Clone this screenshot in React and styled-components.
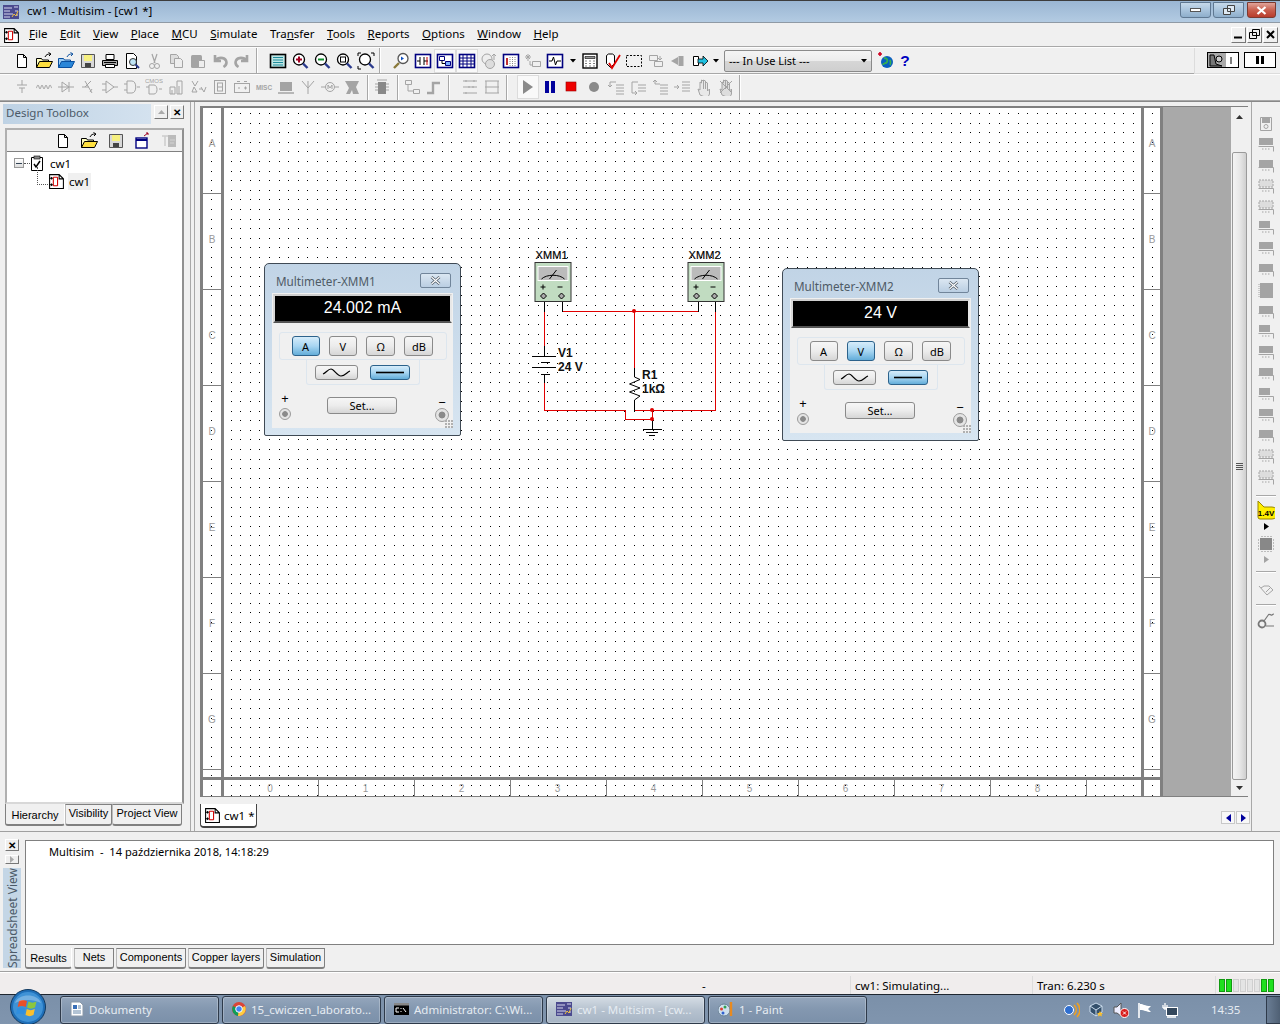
import React from 'react'
import styled, { createGlobalStyle } from 'styled-components'

const font = `"Noto Sans", "Liberation Sans", Arial, sans-serif`

const GlobalStyle = createGlobalStyle`
  html, body { margin: 0; padding: 0; background: #f0f0f0; }
  body { font-family: ${font}; font-size: 11.5px; color: #000; }
  * { box-sizing: border-box; }
`

/* ---------- small icon helpers ---------- */

const Svg = ({ w = 18, h = 18, vb, children }) => (
  <svg width={w} height={h} viewBox={vb || `0 0 ${w} ${h}`} fill="none" shapeRendering="geometricPrecision">
    {children}
  </svg>
)

const G = '#a4a4a4'
const K = '#000'

const Doc = () => <path d="M4.5 2.5h6l3 3v10h-9z M10.5 2.5v3h3" fill="#fff" stroke={K} />
const Mag = ({ fill = '#fff', children }) => (
  <>
    <circle cx="8" cy="7.5" r="5.5" fill={fill} stroke={K} strokeWidth="1.3" />
    {children}
    <path d="M12 11.5l4.5 4.5" stroke="#2a3a8c" strokeWidth="2.4" />
  </>
)
const BlueFrame = ({ children }) => (
  <>
    <rect x="1.5" y="2.5" width="15" height="13" fill="#fff" stroke="#00007f" strokeWidth="1.6" />
    {children}
  </>
)

const icons = {
  new: <Doc />,
  open: (
    <>
      <path d="M1.5 15.5v-9h5l1 1.5h6v2" fill="#ffffc0" stroke={K} />
      <path d="M1.5 15.5l3-6h13l-3 6z" fill="#ffe040" stroke={K} />
      <path d="M10 5c1-2.5 3-3 5-3M13.5.5l2.5 1.5-2 2" stroke={K} />
    </>
  ),
  openBlue: (
    <>
      <path d="M1.5 15.5v-9h5l1 1.5h6v2" fill="#9ccdf5" stroke="#0a4f9e" />
      <path d="M1.5 15.5l3-6h13l-3 6z" fill="#2a86d8" stroke="#0a4f9e" />
      <path d="M10 5c1-2.5 3-3 5-3M13.5.5l2.5 1.5-2 2" stroke="#0a4f9e" />
    </>
  ),
  save: (
    <>
      <path d="M2.5 2.5h13v13h-13z" fill="#d8d8d8" stroke="#555" />
      <rect x="5" y="3" width="8" height="6" fill="#f6f080" />
      <rect x="6" y="11" width="6" height="4" fill="#444" />
    </>
  ),
  print: (
    <>
      <path d="M5 2.5h8v5H5z" fill="#fff" stroke={K} />
      <path d="M1.5 8.5h15v5h-15z" fill="#aaa" stroke={K} />
      <path d="M4.5 12.5h9v3h-9z" fill="#fff" stroke={K} />
      <path d="M3 10.5h12" stroke={K} />
    </>
  ),
  preview: (
    <>
      <path d="M3.5 1.5h7l3 3v12h-10z" fill="#fff" stroke={K} />
      <circle cx="10" cy="10" r="3.5" fill="#bfe4f5" stroke="#333" />
      <path d="M12.5 12.5l3.5 3.5" stroke="#2a3a8c" strokeWidth="2" />
    </>
  ),
  cut: (
    <>
      <path d="M7 2l3 9M12 2L9 11" stroke={G} strokeWidth="1.2" />
      <circle cx="7" cy="14" r="2.5" stroke={G} />
      <circle cx="12" cy="14" r="2.5" stroke={G} />
    </>
  ),
  copy: (
    <>
      <path d="M3.5 2.5h6l2 2v7h-8z" fill="#ddd" stroke={G} />
      <path d="M7.5 6.5h6l2 2v7h-8z" fill="#eee" stroke={G} />
    </>
  ),
  paste: (
    <>
      <rect x="2" y="3" width="11" height="13" rx="1.5" fill={G} />
      <path d="M9.5 8.5h6v7h-6z" fill="#eee" stroke={G} />
    </>
  ),
  undo: <path d="M4 3v6h6M4.5 8.5C7 5 13 5 15 8.5c1 2.5 0 5-2.5 6.5" stroke={G} strokeWidth="2.6" />,
  redo: <path d="M14 3v6H8M13.5 8.5C11 5 5 5 3 8.5c-1 2.5 0 5 2.5 6.5" stroke={G} strokeWidth="2.6" />,
  full: (
    <>
      <rect x="1.5" y="2.5" width="15" height="13" fill="#bfe6e4" stroke={K} strokeWidth="1.6" />
      <path d="M4 5.5h10M4 8h10M4 10.5h10M4 13h10" stroke="#1f8c9c" />
    </>
  ),
  zoomIn: <Mag><path d="M5 7.5h6M8 4.5v6" stroke="#a00020" strokeWidth="2" /></Mag>,
  zoomOut: <Mag><path d="M5 7.5h6" stroke="#109030" strokeWidth="2" /></Mag>,
  zoomArea: <Mag><rect x="5.5" y="5" width="5" height="5" stroke={K} /></Mag>,
  zoomFit: (
    <>
      <Mag />
      <path d="M1 4V1h3M14 1h3v3M1 14v3h3" stroke={K} />
    </>
  ),
  find: (
    <>
      <circle cx="11" cy="6.5" r="5" fill="#fff" stroke="#555" strokeWidth="1.3" />
      <path d="M7 11l-5 5" stroke="#8a7a3a" strokeWidth="2.4" />
      <path d="M9 4.5l3 2-3 2z" fill="#1050c0" />
    </>
  ),
  grapher: <BlueFrame><path d="M6 5v8M10 5v8M3 9h3M10 9h4" stroke={K} /><path d="M13 5v8" stroke="#c00" /></BlueFrame>,
  blocks: <BlueFrame><path d="M3.5 4.5h5v4h-5z" stroke="#00007f" /><path d="M9.5 9.5h5v4h-5z" fill="#7fb0ff" stroke="#00007f" /><path d="M6 8.5v3h3" stroke={K} /></BlueFrame>,
  table: <BlueFrame><path d="M1.5 6h15M1.5 9h15M1.5 12h15M5 3v12M9 3v12M13 3v12" stroke="#00007f" /></BlueFrame>,
  globes: (
    <>
      <circle cx="7" cy="7" r="5" stroke={G} fill="#eee" />
      <circle cx="10" cy="12" r="4.5" stroke={G} fill="#ddd" />
      <path d="M14 2v6M12 4l2-2 2 2" stroke={G} />
    </>
  ),
  rows: <BlueFrame><path d="M4 6h2v7H4z" fill="#c03030" /><path d="M8 5v9M10.5 5v9M13 5v9" stroke="#888" strokeDasharray="1 1" /></BlueFrame>,
  star: <><path d="M4 2v7M1 5h6M2 3l4 4M6 3L2 7" stroke={G} /><path d="M8.5 9.5h8v5h-8zM6 9v4h2" stroke={G} /></>,
  wave: <BlueFrame><path d="M3 9h3l1.5-4 2 8 1.5-4h4" stroke={K} /></BlueFrame>,
  calc: (
    <>
      <rect x="2" y="2" width="14" height="14" fill="#fff" stroke={K} strokeWidth="1.4" />
      <path d="M4 4.5h10v2H4z" fill="#999" stroke={K} strokeWidth=".6" />
      <path d="M4.5 9h1M8.5 9h1M12.5 9h1M4.5 11.5h1M8.5 11.5h1M12.5 11.5h1M4.5 14h1M8.5 14h1M12.5 14h1" stroke={K} />
    </>
  ),
  check: (
    <>
      <path d="M3.5 3.5l2-1.5h4l2 1.5v8l-4 4-4-4z" fill="#fff" stroke={K} />
      <path d="M6 11l3 5 8-13" stroke="#e00000" strokeWidth="1.8" />
    </>
  ),
  dashed: <rect x="1.5" y="3.5" width="15" height="11" stroke={K} strokeDasharray="2 1.5" />,
  swap: <><path d="M2.5 3.5h8v5h-8zM7.5 9.5h8v5h-8z" stroke={G} /><path d="M13 4v4M11 6l2 2 2-2" stroke={G} /></>,
  back: <><path d="M9.5 4v10h5V4z" fill={G} /><path d="M9 5v8L2 9z" fill={G} /></>,
  forward: (
    <>
      <path d="M2.5 4.5h5v9h-5z" fill="#fff" stroke={K} />
      <path d="M7 7h5V4l5 5-5 5v-3H7z" fill="#20c0e0" stroke={K} strokeWidth=".8" />
    </>
  ),
  globe: (
    <>
      <circle cx="11" cy="10" r="6" fill="#0a5fc0" />
      <path d="M8 6c3 0 4 2 3 4s-4 1-4 3M14 8c1 2 1 3 0 5" stroke="#36b050" strokeWidth="1.8" />
      <path d="M2 2h4M4 0v4" stroke="#d00020" strokeWidth="1.6" />
    </>
  ),
  help: <text x="9" y="16" textAnchor="middle" fontFamily="Liberation Sans" fontWeight="700" fontSize="20" fill="#0000c0">?</text>,

  /* greyed component bar */
  gSource: <path d="M9 2v5M4 7h10M6 10h6M9 10v5" stroke={G} />,
  gBasic: <path d="M1 10c1 0 1-3 2-3s1 4 2 4 1-4 2-4 1 4 2 4 1-4 2-4 1 4 2 4 1-4 2-4 1 3 2 3" stroke={G} />,
  gDiode: <path d="M1 9h16M5 4v10l7-5zM12 4v10" stroke={G} />,
  gTrans: <path d="M6 3l7 12M3 9h7M12 3L6 9M13 11l-2 3" stroke={G} />,
  gAnalog: <path d="M1 6h4M1 12h4M13 9h4M5 3v12l8-6z" stroke={G} />,
  gTtl: <path d="M1 6h3M1 12h3M14 9h3M4 3h5c5 0 5 12 0 12H4z" stroke={G} />,
  gCmos: (
    <>
      <path d="M1 9h3M4 7h5c4 0 4 9 0 9H4zM14 11h3" stroke={G} />
      <text x="9" y="5" textAnchor="middle" fontFamily="Liberation Sans" fontSize="6" fill={G}>CMOS</text>
    </>
  ),
  gMcu: <path d="M3 9h5v7H3zM10 3h5v13h-5zM5 12v4M12 8v8" stroke={G} />,
  gMixed: <path d="M3 3l3 5 3-5M5 9l-2 5h5zM12 9l3 5 2-5M10 11h3" stroke={G} />,
  gSeg: <><rect x="3.5" y="2.5" width="11" height="13" stroke={G} /><rect x="6.5" y="5" width="5" height="8" stroke={G} /><path d="M6.5 9h5" stroke={G} /></>,
  gPower: <><rect x="1.5" y="5.5" width="15" height="9" stroke={G} /><path d="M4 3.5h3M11 3.5h3M5 10h2M11 10h3M12.5 8.5v3" stroke={G} /></>,
  gMisc: <text x="9" y="12" textAnchor="middle" fontFamily="Liberation Sans" fontSize="6.5" fontWeight="700" fill={G}>MISC</text>,
  gBlock: <><rect x="3" y="4" width="12" height="9" fill={G} /><path d="M1 15h16" stroke={G} strokeWidth="1.5" /></>,
  gAntenna: <path d="M3 3l6 7 6-7M9 3v13" stroke={G} />,
  gMotor: <><circle cx="9" cy="9" r="4.5" stroke={G} /><path d="M0 9h4M14 9h4M7 11V7l2 3 2-3v4" stroke={G} /></>,
  gBus: <path d="M2 3h14l-3 6 3 7H10l-1-4-2 4H3l3-6z" fill={G} />,
  gChip: <><rect x="5" y="4" width="8" height="12" fill="#888" /><path d="M2 6h3M2 9h3M2 12h3M13 6h3M13 9h3M13 12h3M4 2h10" stroke={G} /></>,
  gHier: <path d="M2.5 2.5h6v4h-6zM10.5 11.5h6v4h-6zM5 7v6h5" stroke={G} />,
  gStep: <path d="M2 15h6V5h7" stroke={G} strokeWidth="2.4" />,
  gBusA: <path d="M2 3h14M2 9h14M2 15h14M5 2v2M8 8v2M13 2v2M5 14v2M12 8v2" stroke={G} />,
  gBusB: <path d="M2 3h14M2 9h14M2 15h14M3 3v12M15 3v12" stroke={G} />,
  play: <path d="M4 2v14l10-7z" fill="#8a8a8a" />,
  pause: <path d="M4 3h4v12H4zM10 3h4v12h-4z" fill="#00009c" />,
  stop: <rect x="3" y="4" width="10" height="9" fill="#ee0000" stroke="#900" strokeWidth=".6" />,
  record: <circle cx="9" cy="9" r="5" fill="#8a8a8a" />,
  stepIn: <path d="M9 7h8M9 10h8M9 13h8M9 16h8M9 4H3v5M1 7l2 2 2-2" stroke={G} />,
  stepOver: <path d="M9 7h8M9 10h8M9 13h8M9 4H3v11h5M6 13l2 2-2 2" stroke={G} />,
  stepOut: <path d="M9 7h8M9 10h8M9 13h8M9 16h8M9 6H4V2M2 4l2-2 2 2" stroke={G} />,
  toCursor: <path d="M9 4h8M9 7h8M9 10h8M9 13h8M1 9h5M4 7l2 2-2 2" stroke={G} />,
  hand: <path d="M5 17l-2-6 2 1V4l1.5 1V2l2 1v8-9l2 1v8-7l2 1v8l2-2v5l-2 4z" fill="#e8e8e8" stroke={G} />,
  handX: <><path d="M5 17l-2-6 2 1V4l1.5 1V2l2 1v8-9l2 1v8-7l2 1v8l2-2v5l-2 4z" fill="#ddd" stroke={G} /><path d="M3 3l12 12M15 3L3 15" stroke={G} /></>,
}

const Ico = ({ n }) => <Svg>{icons[n]}</Svg>

const DropArrow = () => (
  <Svg w={6} h={4}>
    <path d="M0 0h6L3 3.5z" fill="#000" />
  </Svg>
)

const SchematicGlyph = ({ size = 16 }) => (
  <Svg w={size} h={size} vb="0 0 16 16">
    <path d="M1.5 1.5h9l4 4v9h-13z M10.5 1.5v4h4" fill="#fff" stroke="#000" />
    <path d="M5 4v8M5 4h4M5 12h4M9 4v8" stroke="#d00000" />
    <path d="M1 5h3M3 4l1 1-1 1M1 11h3M3 10l1 1-1 1" stroke="#000" />
  </Svg>
)

/* ---------- window chrome ---------- */

const Page = styled.div`
  width: 1280px;
  height: 1024px;
  display: flex;
  flex-direction: column;
  overflow: hidden;
  background: #f0f0f0;
`

const TitleBar = styled.div`
  height: 23px;
  flex: none;
  display: flex;
  align-items: center;
  padding: 0 4px 0 3px;
  border-top: 1px solid #3c3c3c;
  border-bottom: 1px solid #8f9aa5;
  background: linear-gradient(180deg, #9ab6d3 0%, #b3cbe2 100%);
`

const TitleText = styled.span`
  flex: 1;
  margin: 0 0 2px 8px;
`

const CaptionButton = styled.div`
  width: ${p => p.$w}px;
  height: 16px;
  margin-left: ${p => p.$gap}px;
  margin-top: -3px;
  display: flex;
  align-items: center;
  justify-content: center;
  border: 1px solid ${p => (p.$close ? '#7c3a30' : '#5f7892')};
  border-radius: 0 0 3px 3px;
  background: ${p =>
    p.$close
      ? 'linear-gradient(180deg, #e0a49a 0%, #c9604f 50%, #b83c2c 100%)'
      : 'linear-gradient(180deg, #c6d9ea 0%, #a9c4dd 50%, #8eaecb 100%)'};
`

const MenuBar = styled.div`
  height: 24px;
  flex: none;
  display: flex;
  align-items: center;
  padding-left: 3px;
  border-bottom: 1px solid #a8a8a8;
`

const MenuItem = styled.span`
  margin: 0 12.5px 2px 0;
  white-space: nowrap;
`

const MenuIcon = styled.span`
  display: flex;
  width: 26px;
  padding-top: 1px;
`

const MdiButtons = styled.div`
  margin-left: auto;
  margin-right: 2px;
  display: flex;
  gap: 1px;
`

const MdiButton = styled.div`
  width: 15px;
  height: 16px;
  display: flex;
  align-items: center;
  justify-content: center;
  border-right: 1px solid #777;
  border-bottom: 1px solid #777;
  border-top: 1px solid #fff;
  border-left: 1px solid #fff;
`

const ToolRow = styled.div`
  height: ${p => p.$h}px;
  flex: none;
  display: flex;
  align-items: center;
  padding: 0 0 ${p => p.$pb || 0}px 11px;
  border-bottom: 1px solid #a8a8a8;
  border-top: 1px solid #fdfdfd;
`

const Tool = styled.div`
  width: ${p => p.$w || 22}px;
  height: 24px;
  flex: none;
  display: flex;
  align-items: center;
  justify-content: center;
  ${p => p.$sel && `background: #f9f9f9; outline: 1px solid #dcdcdc; outline-offset: -1px;`}
`

const ToolSep = styled.div`
  width: 1px;
  height: 25px;
  flex: none;
  background: #a8a8a8;
  box-shadow: 1px 0 0 #fff;
  margin: 0 ${p => p.$r}px 0 ${p => p.$l}px;
`

const Combo = styled.div`
  width: 148px;
  height: 22px;
  margin-left: 3px;
  display: flex;
  align-items: center;
  justify-content: space-between;
  padding: 0 4px 0 4px;
  border: 1px solid #8a8a8a;
  border-radius: 2px;
  background: linear-gradient(180deg, #f4f4f4 0%, #ececec 50%, #d6d6d6 51%, #cfcfcf 100%);
  font-size: 11px;
`

const SwitchArea = styled.div`
  margin-left: auto;
  width: 86px;
  height: 26px;
  display: flex;
  align-items: center;
  gap: 5px;
  padding-left: 12px;
  border-left: 1px solid #dcdcdc;
  border-bottom: 1px solid #dcdcdc;
`

const SimSwitch = styled.div`
  width: 32px;
  height: 16px;
  display: flex;
  align-items: center;
  justify-content: center;
  border: 1px solid #000;
  background: ${p => p.$bg};
`

/* ---------- main area ---------- */

const Main = styled.div`
  flex: 1;
  display: flex;
  min-height: 0;
  border-bottom: 1px solid #a0a0a0;
  border-top: 1px solid #888;
`

const LeftPanel = styled.div`
  width: 191px;
  flex: none;
  display: flex;
  flex-direction: column;
  padding: 2px 6px 5px 3px;
  border-right: 1px solid #a8a8a8;
`

const PanelHead = styled.div`
  height: 20px;
  flex: none;
  display: flex;
  gap: 2px;
`

const PanelTitle = styled.div`
  flex: 1;
  display: flex;
  align-items: center;
  padding: 0 0 3px 3px;
  background: linear-gradient(90deg, #bed2e4, #d4e2ef);
  color: #4c5a68;
  margin-right: 1px;
`

const SmallBtn = styled.div`
  width: 14px;
  height: 14px;
  margin-top: 1px;
  display: flex;
  align-items: center;
  justify-content: center;
  background: #efefef;
  border: 1px solid #fff;
  border-right-color: #777;
  border-bottom-color: #777;
  font-size: 10px;
  font-weight: 700;
  line-height: 1;
`

const PanelBox = styled.div`
  flex: 1;
  margin: 4px 0 0 2px;
  display: flex;
  flex-direction: column;
  border: 2px solid #b0b0b0;
  border-bottom-color: #d8d8d8;
  border-right-color: #909090;
  min-height: 0;
`

const PanelTools = styled.div`
  height: 22px;
  flex: none;
  display: flex;
  align-items: center;
  justify-content: flex-end;
  border-bottom: 1px solid #808080;
`

const PanelTool = styled.div`
  width: 26.5px;
  display: flex;
  justify-content: center;
`

const Tree = styled.div`
  flex: 1;
  background: #fff;
  padding: 2px 0 0 7px;
`

const TreeRow = styled.div`
  height: 18px;
  display: flex;
  align-items: center;
  padding-left: ${p => p.$indent || 0}px;
`

const Expander = styled.div`
  width: 10px;
  height: 10px;
  border: 1px solid #999;
  background: linear-gradient(180deg, #fff, #ddd);
  display: flex;
  align-items: center;
  justify-content: center;
  &::after {
    content: '';
    width: 6px;
    height: 1px;
    background: #345;
  }
`

const DotLine = styled.div`
  width: 6px;
  border-top: 1px dotted #555;
`

const Elbow = styled.div`
  width: 11px;
  height: 18px;
  margin-top: -9px;
  border-left: 1px dotted #555;
  border-bottom: 1px dotted #555;
  transform: translateY(-1px);
`

const TreeLabel = styled.span`
  margin-left: ${p => p.$ml}px;
  padding: 0 1px;
  background: ${p => (p.$sel ? '#f0f0f0' : 'transparent')};
  line-height: 17px;
`

const TabRow = styled.div`
  height: ${p => p.$h}px;
  margin-top: ${p => p.$mt || 0}px;
  flex: none;
  display: flex;
  gap: ${p => p.$gap || 0}px;
  padding-left: ${p => p.$pl || 0}px;
`

const Tab = styled.div`
  width: ${p => p.$w}px;
  display: flex;
  align-items: ${p => (p.$active ? 'flex-end' : 'center')};
  justify-content: center;
  font: 11px "Liberation Sans", Arial, sans-serif;
  line-height: 1;
  padding-bottom: ${p => (p.$active ? '3px' : '2px')};
  border-right: 1px solid ${p => (p.$active ? '#fff' : '#808080')};
  border-bottom: 2px solid #808080;
  border-left: 1px solid ${p => (p.$active ? '#808080' : '#bbb')};
  border-top: ${p => (p.$active ? 'none' : '1px solid #808080')};
  border-radius: 0 0 3px 3px;
  white-space: nowrap;
`

const CanvasColumn = styled.div`
  width: 1057px;
  flex: none;
  margin-left: 3px;
  display: flex;
  flex-direction: column;
  border-left: 1px solid #a8a8a8;
`

const CanvasPanel = styled.div`
  position: relative;
  height: 691px;
  flex: none;
  margin: 4px 3px 0 5px;
  display: flex;
  border-top: 1px solid #808080;
  border-bottom: 1px solid #808080;
`

const Sheet = styled.div`
  position: relative;
  width: 963px;
  flex: none;
  display: grid;
  grid-template-columns: 18px 3px 917px 3px 16px;
  grid-template-rows: 669px 3px 1fr;
  border: solid #808080;
  border-width: 1px 3px 0 3px;
  background: #fff;
  overflow: hidden;
`

const Dots = styled.svg`
  position: absolute;
  left: -3px;
  top: -1px;
`

const VBar = styled.div`
  background: #808080;
  position: relative;
`

const HBar = styled.div`
  grid-column: 1 / -1;
  background: #808080;
  position: relative;
`

const SideRuler = styled.div`
  position: relative;
  display: flex;
  flex-direction: column;
  overflow: hidden;
`

const SideCell = styled.div`
  height: ${p => p.$h || 96}px;
  flex: none;
  display: flex;
  align-items: center;
  justify-content: center;
  border-bottom: 1px solid #808080;
  color: #9a9a9a;
  font: 10px "Liberation Sans", sans-serif;
  padding-bottom: ${p => p.$pb || 4}px;
`

const BottomRuler = styled.div`
  position: relative;
  display: flex;
  overflow: hidden;
`

const BottomCell = styled.div`
  width: ${p => p.$w || 96}px;
  flex: none;
  display: flex;
  align-items: center;
  justify-content: center;
  border-right: 1px solid #808080;
  color: #9a9a9a;
  font: 10px "Liberation Sans", sans-serif;
  padding-right: 2px;
`

const Corner = styled.div`
  position: relative;
`

const GreyArea = styled.div`
  flex: 1;
  background: #a9a9a9;
`

const VScroll = styled.div`
  width: 17px;
  flex: none;
  display: flex;
  flex-direction: column;
  align-items: center;
  background: #f0f0f0;
`

const ScrollArrow = styled.div`
  height: ${p => p.$h}px;
  flex: none;
  display: flex;
  align-items: ${p => (p.$top ? 'flex-start' : 'center')};
  padding-top: ${p => (p.$top ? '8px' : '0')};
  justify-content: center;
`

const Thumb = styled.div`
  width: 15px;
  flex: 1;
  display: flex;
  flex-direction: column;
  align-items: center;
  justify-content: center;
  gap: 1px;
  border: 1px solid #9a9a9a;
  border-radius: 2px;
  background: linear-gradient(90deg, #f4f4f4 0%, #e8e8e8 50%, #cfcfcf 100%);
  & > i {
    width: 7px;
    height: 1px;
    background: #555;
  }
`

const RightBar = styled.div`
  width: 29px;
  flex: none;
  display: flex;
  flex-direction: column;
  align-items: center;
  padding-top: 12px;
  border-left: 1px solid #a8a8a8;
`

const RightTool = styled.div`
  height: ${p => p.$h || 20.8}px;
  flex: none;
  display: flex;
  align-items: center;
  justify-content: center;
`

const RightSep = styled.div`
  width: 20px;
  height: 1px;
  flex: none;
  background: #a8a8a8;
  box-shadow: 0 1px 0 #fff;
  margin: ${p => p.$t}px 0 ${p => p.$b}px;
`

const DocTabs = styled.div`
  flex: 1;
  display: flex;
  align-items: flex-start;
  padding-left: 5px;
`

const DocTab = styled.div`
  width: 57px;
  height: 24px;
  margin-top: 7px;
  display: flex;
  align-items: center;
  gap: 3px;
  padding-left: 3px;
  border-style: solid;
  border-width: 0 1px 2px 1px;
  border-color: #444;
  border-radius: 0 0 4px 4px;
  background: #fff;
  white-space: nowrap;
`

const TabNav = styled.div`
  margin-left: auto;
  margin-top: 14px;
  margin-right: 1px;
  display: flex;
  gap: 1px;
`

const TabNavBtn = styled.div`
  width: 14px;
  height: 13px;
  display: flex;
  align-items: center;
  justify-content: center;
  background: #f8f8f8;
  border: 1px solid #c8c8c8;
`

/* ---------- multimeter windows, free on the canvas ---------- */

const MeterWindow = styled.div`
  position: absolute;
  left: ${p => p.$x}px;
  top: ${p => p.$y}px;
  width: 197px;
  height: 173px;
  display: flex;
  flex-direction: column;
  border: 1px solid #3f4a55;
  border-radius: 5px 5px 2px 2px;
  padding: 0 7px 7px;
  background: linear-gradient(180deg, #c1d4e6 0%, #d7e5f1 100%);
`

const MeterHead = styled.div`
  height: 29px;
  flex: none;
  display: flex;
  align-items: center;
  justify-content: space-between;
  padding: 4px 2px 0 4px;
  color: #4f5b66;
  font-size: 11.7px;
`

const MeterClose = styled.div`
  width: 31px;
  height: 15px;
  display: flex;
  align-items: center;
  justify-content: center;
  border: 1px solid #71859a;
  border-radius: 2px;
  background: linear-gradient(180deg, #dbe7f2, #bacee2);
`

const MeterBody = styled.div`
  position: relative;
  flex: 1;
  display: flex;
  flex-direction: column;
  align-items: center;
  background: #f0f0f0;
`

const Readout = styled.div`
  width: 179px;
  height: 29px;
  margin-top: 1px;
  flex: none;
  display: flex;
  align-items: center;
  justify-content: center;
  padding-bottom: 1px;
  background: #000;
  color: #fff;
  font: 16px "Liberation Sans", sans-serif;
  border: 2px solid #d8d8d8;
  border-bottom-color: #555;
  border-right-color: #e8e8e8;
  border-top-color: #cfcfcf;
`

const ModeGroup = styled.div`
  width: 168px;
  height: 28px;
  margin-top: 9px;
  flex: none;
  display: flex;
  align-items: center;
  justify-content: space-between;
  padding: 0 12px;
  border: 1px solid #dde6ee;
  border-radius: 3px;
`

const WaveGroup = styled.div`
  width: 114px;
  height: 25px;
  flex: none;
  display: flex;
  align-items: center;
  justify-content: center;
  gap: 12px;
  border: 1px solid #dde6ee;
  border-top: none;
  border-radius: 0 0 3px 3px;
`

const MeterBtn = styled.div`
  width: ${p => p.$w}px;
  height: ${p => p.$h}px;
  display: flex;
  align-items: center;
  justify-content: center;
  border: 1px solid ${p => (p.$on ? '#2c628b' : '#8a8a8a')};
  border-radius: 3px;
  background: ${p =>
    p.$on
      ? 'linear-gradient(180deg, #d6ecfa 0%, #a8d6f2 50%, #63add9 100%)'
      : 'linear-gradient(180deg, #f6f6f6 0%, #ececec 50%, #d6d6d6 100%)'};
  font-size: 11px;
  line-height: 1;
`

const SetButton = styled(MeterBtn)`
  margin: 8px 0 0 -3px;
`

const MeterFoot = styled.div`
  flex: 1;
  align-self: stretch;
  display: flex;
  justify-content: space-between;
  padding: 4px 4px 0 6px;
`

const TermCol = styled.div`
  width: 14px;
  display: flex;
  flex-direction: column;
  align-items: center;
  padding-top: ${p => p.$pt}px;
  line-height: 12px;
  font-size: 13px;
`

const Terminal = styled.div`
  width: ${p => p.$d}px;
  height: ${p => p.$d}px;
  flex: none;
  margin-top: ${p => p.$mt}px;
  border-radius: 50%;
  border: 1px solid #9a9a9a;
  background: radial-gradient(circle, #8a8a8a 0 35%, #e4e4e4 45% 100%);
`

const Grip = styled.div`
  position: absolute;
  right: 0;
  bottom: 0;
  width: 8px;
  height: 8px;
  background:
    radial-gradient(circle at 1px 1px, #b0b0b0 1px, transparent 1px) 0 0 / 3px 3px;
`

const Meter = ({ x, y, title, reading, mode }) => (
  <MeterWindow $x={x} $y={y}>
    <MeterHead>
      <span>{title}</span>
      <MeterClose>
        <Svg w={11} h={9}>
          <path d="M1.5 1l8 7M9.5 1l-8 7" stroke="#46525e" strokeWidth="2.6" />
          <path d="M1.5 1l8 7M9.5 1l-8 7" stroke="#fff" strokeWidth="1.2" />
        </Svg>
      </MeterClose>
    </MeterHead>
    <MeterBody>
      <Readout>{reading}</Readout>
      <ModeGroup>
        {['A', 'V', 'Ω', 'dB'].map(m => (
          <MeterBtn key={m} $w={m === 'A' || m === 'V' ? 28 : 29} $h={20} $on={m === mode}>
            {m}
          </MeterBtn>
        ))}
      </ModeGroup>
      <WaveGroup>
        <MeterBtn $w={43} $h={15}>
          <Svg w={30} h={9}>
            <path d="M1 6c3-1 5-5 8-5s6 7 10 7 6-4 9-5" stroke="#000" strokeWidth="1.2" />
          </Svg>
        </MeterBtn>
        <MeterBtn $w={40} $h={15} $on>
          <Svg w={30} h={3}>
            <path d="M1 1.5h28" stroke="#000" strokeWidth="1.6" />
          </Svg>
        </MeterBtn>
      </WaveGroup>
      <MeterFoot>
        <TermCol $pt={3}>
          +
          <Terminal $d={12} $mt={4} />
        </TermCol>
        <SetButton $w={70} $h={17}>Set...</SetButton>
        <TermCol $pt={7}>
          −
          <Terminal $d={14} $mt={0} />
        </TermCol>
      </MeterFoot>
      <Grip />
    </MeterBody>
  </MeterWindow>
)

/* ---------- schematic drawing, in page coordinates ---------- */

const SchematicSvg = styled.svg`
  position: absolute;
  left: 0;
  top: 0;
  pointer-events: none;
`

const InstrumentGlyph = ({ x, label }) => (
  <g>
    <text x={x + 17} y={259} textAnchor="middle" fontFamily="Liberation Sans" fontSize="11" fill="#000" stroke="#000" strokeWidth=".2" textLength="32">
      {label}
    </text>
    <rect x={x + 0.5} y={262.5} width={36} height={39} fill="#c1dcc1" stroke="#333" />
    <rect x={x + 3.5} y={266.5} width={30} height={14} fill="#bbb" stroke="#fff" />
    <path d={`M${x + 7} 279c5-5 18-5 23 0M${x + 15} 279l7-9`} stroke="#000" fill="none" />
    <path d={`M${x + 6} 287h5M${x + 8.5} 284.5v5M${x + 23} 287h5`} stroke="#000" fill="none" />
    <path d={`M${x + 9} 293l3 3-3 3-3-3zM${x + 27} 293l3 3-3 3-3-3z`} fill="#aaa" stroke="#000" />
  </g>
)

const Schematic = () => (
  <SchematicSvg width="1048" height="689" viewBox="200 107 1048 689">
    <g strokeWidth="1" shapeRendering="crispEdges" fill="none">
      <path d="M544.5 311.5V345.5M544.5 382.5V410.5H625.5V419.5H652.5V410.5M634.5 311.5V367.5M562.5 311.5H698.5M634.5 410.5H715.5V311.5" stroke="#e00000" />
      <path d="M544.5 300V311.5M544.5 345.5V356M544.5 374V382.5M562.5 300V311.5M698.5 300V311.5M715.5 300V311.5M634.5 367.5V377M634.5 400V410.5M652.5 419.5V429" stroke="#000" />
      <path d="M532 356.5H556M541 362.5H550M532 367.5H556M541 374.5H550M643 429.5H662M646 432.5H658M649 435.5H655" stroke="#000" />
    </g>
    <path d="M634.5 377l5.5 2.5-10.5 4.5 10.5 4-10.5 4 10.5 4-5.5 4" stroke="#000" fill="none" />
    <g fill="#e00000">
      <circle cx="634" cy="311" r="2" />
      <circle cx="652" cy="410" r="2" />
      <circle cx="652" cy="419" r="2" />
    </g>
    <InstrumentGlyph x={534.5} label="XMM1" />
    <InstrumentGlyph x={687.5} label="XMM2" />
    <g fontFamily="Liberation Sans" fontSize="12" fontWeight="700" fill="#111">
      <text x="558" y="357">V1</text>
      <text x="558" y="371">24 V</text>
      <text x="642" y="379">R1</text>
      <text x="642" y="393">1kΩ</text>
    </g>
  </SchematicSvg>
)

const dotPath = (() => {
  let d = ''
  for (let row = 0; row < 72; row++) {
    for (let col = -3; col < 98; col++) {
      const px = Math.round(221 + col * 9.6) - 200
      const py = Math.round(113 + row * 9.6) - 107
      d += `M${px} ${py}h1v1h-1z`
    }
  }
  return d
})()

/* ---------- bottom ---------- */

const Spreadsheet = styled.div`
  height: 140px;
  flex: none;
  display: flex;
  border-bottom: 1px solid #a0a0a0;
  padding: 6px 6px 1px 2px;
`

const SideStrip = styled.div`
  width: 19px;
  flex: none;
  display: flex;
  flex-direction: column;
  align-items: center;
  gap: 3px;
`

const VertLabel = styled.div`
  flex: 1;
  width: 18px;
  margin: 1px 0 2px;
  display: flex;
  align-items: center;
  justify-content: center;
  writing-mode: vertical-rl;
  transform: rotate(180deg);
  background: #c4d6e6;
  color: #4c5a68;
  font-size: 12px;
  white-space: nowrap;
`

const SheetBody = styled.div`
  flex: 1;
  margin-left: 4px;
  display: flex;
  flex-direction: column;
`

const ResultsBox = styled.div`
  height: 105px;
  flex: none;
  padding: 3px 0 0 23px;
  margin-top: 2px;
  background: #fff;
  border: 1px solid #808080;
  white-space: pre;
  font-size: 11.1px;
  line-height: 16px;
`

const StatusBar = styled.div`
  height: 22px;
  flex: none;
  display: flex;
  align-items: center;
  padding-top: 3px;
  background: #f0eded;
  border-top: 1px solid #fff;
`

const StatusCell = styled.div`
  width: ${p => p.$w}px;
  height: 100%;
  flex: none;
  display: flex;
  align-items: center;
  padding-left: ${p => p.$pl}px;
  border-right: 1px solid #dcdcdc;
  white-space: nowrap;
`

const Leds = styled.div`
  display: flex;
  gap: 1px;
  padding-left: 3px;
`

const Led = styled.div`
  width: 6px;
  height: 13px;
  background: ${p => (p.$on ? '#1fe01f' : '#e4e4e4')};
  border: 1px solid ${p => (p.$on ? '#119a11' : '#cfcfcf')};
`

const Taskbar = styled.div`
  height: 30px;
  flex: none;
  display: flex;
  align-items: center;
  background: linear-gradient(180deg, #7b90a9 0%, #8095ae 100%);
  border-top: 1px solid #1e2630;
`

const StartOrb = styled.div`
  width: 60px;
  flex: none;
  display: flex;
  justify-content: center;
  padding-right: 5px;
  margin-top: -6px;
  z-index: 1;
`

const TaskButton = styled.div`
  width: 159px;
  height: 28px;
  margin-right: 3px;
  flex: none;
  display: flex;
  align-items: center;
  gap: 5px;
  padding: 0 0 1px 9px;
  border: 1px solid #2e3a4a;
  border-radius: 3px;
  box-shadow: inset 0 0 0 1px rgba(255, 255, 255, 0.25);
  background: ${p =>
    p.$active
      ? 'linear-gradient(180deg, #d4dce4 0%, #b6c2cf 50%, #a6b4c4 100%)'
      : 'linear-gradient(180deg, #94a6bc 0%, #8498b0 45%, #7b90a9 100%)'};
  color: #e6ecf2;
  white-space: nowrap;
  overflow: hidden;
`

const Tray = styled.div`
  margin-left: auto;
  display: flex;
  align-items: center;
`

const TrayIcon = styled.div`
  width: 24.5px;
  display: flex;
  justify-content: center;
`

const Clock = styled.div`
  width: 84px;
  padding-left: 29px;
  color: #e6ecf2;
`

const ShowDesktop = styled.div`
  width: 14px;
  height: 28px;
  border: 1px solid #2e3a4a;
  border-right: none;
  background: linear-gradient(90deg, #6a7d94, #4f6074);
`

/* ---------- data ---------- */

const Menu = [
  ['F', 'ile'],
  ['E', 'dit'],
  ['V', 'iew'],
  ['P', 'lace'],
  ['M', 'CU'],
  ['S', 'imulate'],
  ['Tra', 'n', 'sfer'],
  ['T', 'ools'],
  ['R', 'eports'],
  ['O', 'ptions'],
  ['W', 'indow'],
  ['H', 'elp'],
]

const rightTools = [
  'save', 'pinsA', 'pinsB', 'hatch', 'hatch', 'solid', 'pinsA', 'pinsB', 'tall',
  'pinsB', 'solid', 'pinsA', 'pinsB', 'solid', 'pinsA', 'pinsB', 'hatch', 'hatch',
]

const RightGlyph = ({ kind }) => {
  if (kind === 'save')
    return (
      <Svg>
        <path d="M3.5 2.5h11v13h-11z" stroke={G} />
        <rect x="5" y="2" width="8" height="6" fill={G} />
        <circle cx="9" cy="11.5" r="2" stroke={G} />
      </Svg>
    )
  if (kind === 'tall')
    return (
      <Svg>
        <rect x="3" y="1" width="13" height="15" fill={G} />
        <path d="M2 2v13" stroke={G} strokeDasharray="1 1" />
      </Svg>
    )
  return (
    <Svg>
      {kind === 'hatch' ? (
        <path d="M2 2h14v7H2z" fill="#ddd" stroke={G} strokeDasharray="2 1" />
      ) : (
        <rect x="2" y={kind === 'pinsB' ? 3 : 2} width={kind === 'solid' ? 11 : 14} height={7} fill={G} />
      )}
      <path d="M1.5 10.5h15v5" stroke={G} />
      <path d="M5 13h9" stroke={G} strokeDasharray="1.5 1.5" />
    </Svg>
  )
}

const WinLogo = () => (
  <Svg w={36} h={36}>
    <circle cx="18" cy="18" r="17.5" fill="#1f6fb8" stroke="#12395f" />
    <circle cx="18" cy="18" r="15" fill="#3f92d6" />
    <path d="M9 12c3-1.5 5-1.5 8 0l-1.3 6c-3-1.5-5-1.5-8 0z" fill="#e8502a" />
    <path d="M18.5 12.5c3 1.5 5 1.5 8 0L25 18.5c-3 1.5-5 1.5-8 0z" fill="#8cc63f" />
    <path d="M7.3 19.5c3-1.5 5-1.5 8 0L14 25.5c-3-1.5-5-1.5-8 0z" fill="#2f8fe0" />
    <path d="M16.8 20c3 1.5 5 1.5 8 0l-1.3 6c-3 1.5-5 1.5-8 0z" fill="#fbc02d" />
    <path d="M5 14c3-10 23-10 26 0-8-4-18-4-26 0z" fill="#fff" opacity=".28" />
  </Svg>
)

const MultisimMark = () => (
  <Svg w={16} h={16}>
    <rect x="0" y="1" width="16" height="14" fill="#4b4a8e" />
    <path d="M1 4h8M1 7h6M1 10h9M1 13h6M11 3h4M12 7h3M13 11h2" stroke="#d8d8ee" />
    <path d="M9 13l2-3 2 2 2-5" stroke="#f0c040" />
  </Svg>
)

const App = () => (
  <Page>
    <GlobalStyle />
    <TitleBar>
      <MultisimMark />
      <TitleText>cw1 - Multisim - [cw1 *]</TitleText>
      <CaptionButton $w={31} $gap={0}>
        <Svg w={11} h={4}><rect x=".5" y=".5" width="10" height="3" fill="#fff" stroke="#555" /></Svg>
      </CaptionButton>
      <CaptionButton $w={31} $gap={2}>
        <Svg w={12} h={10}>
          <path d="M4.5 .5h7v6h-7zM.5 3.5h7v6h-7z" fill="#dde8f2" stroke="#444" />
        </Svg>
      </CaptionButton>
      <CaptionButton $w={29} $gap={3} $close>
        <Svg w={11} h={9}><path d="M1.5 1l8 7M9.5 1l-8 7" stroke="#fff" strokeWidth="2.2" /></Svg>
      </CaptionButton>
    </TitleBar>

    <MenuBar>
      <MenuIcon><SchematicGlyph size={17} /></MenuIcon>
      {Menu.map(([a, b, c]) =>
        c ? (
          <MenuItem key={a}>{a}<u>{b}</u>{c}</MenuItem>
        ) : (
          <MenuItem key={a}><u>{a}</u>{b}</MenuItem>
        )
      )}
      <MdiButtons>
        <MdiButton><Svg w={9} h={9}><path d="M0 7.5h8" stroke="#000" strokeWidth="2" /></Svg></MdiButton>
        <MdiButton>
          <Svg w={11} h={11}><path d="M3.5 .5h7v6h-7zM.5 3.5h7v6h-7z" fill="#f0f0f0" stroke="#000" /></Svg>
        </MdiButton>
        <MdiButton><Svg w={9} h={9}><path d="M1 1l7 7M8 1L1 8" stroke="#000" strokeWidth="2" /></Svg></MdiButton>
      </MdiButtons>
    </MenuBar>

    <ToolRow $h={27}>
      {['new', 'open', 'openBlue', 'save', 'print', 'preview', 'cut', 'copy', 'paste', 'undo', 'redo'].map(n => (
        <Tool key={n}><Ico n={n} /></Tool>
      ))}
      <ToolSep $l={3} $r={10} />
      {['full', 'zoomIn', 'zoomOut', 'zoomArea', 'zoomFit'].map(n => (
        <Tool key={n}><Ico n={n} /></Tool>
      ))}
      <ToolSep $l={2} $r={10} />
      <Tool><Ico n="find" /></Tool>
      <Tool><Ico n="grapher" /></Tool>
      <Tool $sel><Ico n="blocks" /></Tool>
      <Tool $sel><Ico n="table" /></Tool>
      <Tool><Ico n="globes" /></Tool>
      <Tool><Ico n="rows" /></Tool>
      <Tool><Ico n="star" /></Tool>
      <Tool><Ico n="wave" /></Tool>
      <Tool $w={13}><DropArrow /></Tool>
      {['calc', 'check', 'dashed', 'swap', 'back', 'forward'].map(n => (
        <Tool key={n}><Ico n={n} /></Tool>
      ))}
      <Tool $w={10}><DropArrow /></Tool>
      <Combo>
        <span>--- In Use List ---</span>
        <DropArrow />
      </Combo>
      <Tool $w={26}><Ico n="globe" /></Tool>
      <Tool $w={14}><Ico n="help" /></Tool>
      <SwitchArea>
        <SimSwitch $bg="linear-gradient(90deg, #aaa 0 60%, #fff 60%)">
          <Svg w={30} h={14}>
            <path d="M2 13V2h4l2 9 6 2z" fill="#777" stroke="#000" />
            <circle cx="11" cy="6" r="3" fill="#ccc" stroke="#000" />
            <path d="M23 4v7" stroke="#000" />
          </Svg>
        </SimSwitch>
        <SimSwitch $bg="#fff">
          <Svg w={8} h={8}><path d="M0 0h3v8H0zM5 0h3v8H5z" fill="#000" /></Svg>
        </SimSwitch>
      </SwitchArea>
    </ToolRow>

    <ToolRow $h={27} $pb={1}>
      {['gSource', 'gBasic', 'gDiode', 'gTrans', 'gAnalog', 'gTtl', 'gCmos', 'gMcu', 'gMixed', 'gSeg', 'gPower', 'gMisc', 'gBlock', 'gAntenna', 'gMotor', 'gBus'].map(n => (
        <Tool key={n}><Ico n={n} /></Tool>
      ))}
      <ToolSep $l={4} $r={3} />
      <Tool><Ico n="gChip" /></Tool>
      <ToolSep $l={4} $r={3} />
      <Tool><Ico n="gHier" /></Tool>
      <Tool><Ico n="gStep" /></Tool>
      <ToolSep $l={3} $r={10} />
      <Tool><Ico n="gBusA" /></Tool>
      <Tool><Ico n="gBusB" /></Tool>
      <ToolSep $l={3} $r={10} />
      <Tool $sel><Ico n="play" /></Tool>
      <Tool><Ico n="pause" /></Tool>
      <Tool><Ico n="stop" /></Tool>
      <Tool><Ico n="record" /></Tool>
      <Tool><Ico n="stepIn" /></Tool>
      <Tool><Ico n="stepOver" /></Tool>
      <Tool><Ico n="stepOut" /></Tool>
      <Tool><Ico n="toCursor" /></Tool>
      <Tool><Ico n="hand" /></Tool>
      <Tool><Ico n="handX" /></Tool>
      <ToolSep $l={2} $r={0} />
    </ToolRow>

    <Main>
      <LeftPanel>
        <PanelHead>
          <PanelTitle>Design Toolbox</PanelTitle>
          <SmallBtn><Svg w={7} h={4}><path d="M0 4l3.5-4L7 4z" fill="#aaa" /></Svg></SmallBtn>
          <SmallBtn>✕</SmallBtn>
        </PanelHead>
        <PanelBox>
          <PanelTools>
            {['new', 'open', 'save'].map(n => (
              <PanelTool key={n}><Ico n={n} /></PanelTool>
            ))}
            <PanelTool>
              <Svg>
                <rect x="3" y="6" width="11" height="10" fill="#fff" stroke="#00007f" strokeWidth="1.4" />
                <path d="M3 8h11" stroke="#00007f" strokeWidth="2" />
                <path d="M11 4l4-3M13 1h2v2" stroke="#a00020" />
              </Svg>
            </PanelTool>
            <PanelTool>
              <Svg>
                <rect x="8" y="3" width="8" height="12" fill="#bbb" />
                <path d="M2 4h6M5 4v10M10 8h5M10 11h4" stroke="#ccc" strokeWidth="1.5" />
              </Svg>
            </PanelTool>
          </PanelTools>
          <Tree>
            <TreeRow>
              <Expander />
              <DotLine />
              <Svg w={14} h={16}>
                <path d="M1.5 2.5h11v13h-11z" fill="#fff" stroke="#000" />
                <rect x="4" y="1" width="6" height="3" fill="#888" stroke="#000" strokeWidth=".6" />
                <path d="M4 9l2 3 4-6" stroke="#000" strokeWidth="1.5" />
              </Svg>
              <TreeLabel $ml={5}>cw1</TreeLabel>
            </TreeRow>
            <TreeRow $indent={23}>
              <Elbow />
              <SchematicGlyph size={17} />
              <TreeLabel $ml={3} $sel>cw1</TreeLabel>
            </TreeRow>
          </Tree>
        </PanelBox>
        <TabRow $h={22} $pl={2}>
          <Tab $w={60} $active>Hierarchy</Tab>
          <Tab $w={47}>Visibility</Tab>
          <Tab $w={70}>Project View</Tab>
        </TabRow>
      </LeftPanel>

      <CanvasColumn>
        <CanvasPanel>
          <Sheet>
            <Dots width="963" height="692"><path d={dotPath} fill="#000" shapeRendering="crispEdges" /></Dots>
            <SideRuler>
              <SideCell $h={86} $pb={14}>A</SideCell>
              {['B', 'C', 'D', 'E', 'F', 'G'].map(l => (
                <SideCell key={l}>{l}</SideCell>
              ))}
            </SideRuler>
            <VBar />
            <div />
            <VBar />
            <SideRuler>
              <SideCell $h={86} $pb={14}>A</SideCell>
              {['B', 'C', 'D', 'E', 'F', 'G'].map(l => (
                <SideCell key={l}>{l}</SideCell>
              ))}
            </SideRuler>
            <HBar />
            <Corner />
            <VBar />
            <BottomRuler>
              {[0, 1, 2, 3, 4, 5, 6, 7, 8, 9].map(n => (
                <BottomCell key={n} $w={n === 0 ? 95 : 96}>{n === 9 ? '' : n}</BottomCell>
              ))}
            </BottomRuler>
            <VBar />
            <Corner />
          </Sheet>
          <GreyArea />
          <VScroll>
            <ScrollArrow $h={45} $top>
              <Svg w={7} h={4}><path d="M0 4l3.5-4L7 4z" fill="#333" /></Svg>
            </ScrollArrow>
            <Thumb><i /><i /><i /><i /></Thumb>
            <ScrollArrow $h={16}>
              <Svg w={7} h={4}><path d="M0 0l3.5 4L7 0z" fill="#333" /></Svg>
            </ScrollArrow>
          </VScroll>
          <Meter x={64} y={156} title="Multimeter-XMM1" reading="24.002 mA" mode="A" />
          <Meter x={582} y={161} title="Multimeter-XMM2" reading="24 V" mode="V" />
          <Schematic />
        </CanvasPanel>
        <DocTabs>
          <DocTab>
            <SchematicGlyph size={17} />
            cw1 *
          </DocTab>
          <TabNav>
            <TabNavBtn><Svg w={5} h={8}><path d="M5 0L0 4l5 4z" fill="#00009c" /></Svg></TabNavBtn>
            <TabNavBtn><Svg w={5} h={8}><path d="M0 0l5 4-5 4z" fill="#00009c" /></Svg></TabNavBtn>
          </TabNav>
        </DocTabs>
      </CanvasColumn>

      <RightBar>
        {rightTools.map((k, i) => (
          <RightTool key={i}><RightGlyph kind={k} /></RightTool>
        ))}
        <RightSep $t={7} $b={3.5} />
        <RightTool>
          <Svg w={18} h={20}>
            <path d="M1 1l6 6h8a3 3 0 0 1 0 12H3a2 2 0 0 1-2-2z" fill="#ffee00" stroke="#998800" />
            <text x="9" y="16" textAnchor="middle" fontFamily="Liberation Sans" fontSize="8" fontWeight="700" fill="#000">1.4V</text>
          </Svg>
        </RightTool>
        <RightTool $h={12}><Svg w={5} h={7}><path d="M0 0l5 3.5L0 7z" fill="#000" /></Svg></RightTool>
        <RightTool $h={22}>
          <Svg w={16} h={16}>
            <rect x="2" y="2" width="12" height="12" fill="#888" />
            <path d="M0 4h16M0 7h16M0 10h16M0 13h16M4 0v16M7 0v16M10 0v16M13 0v16" stroke="#888" strokeDasharray="1 2" />
          </Svg>
        </RightTool>
        <RightTool $h={10}><Svg w={5} h={7}><path d="M0 0l5 3.5L0 7z" fill={G} /></Svg></RightTool>
        <RightSep $t={6} $b={6.5} />
        <RightTool>
          <Svg>
            <path d="M2 6l8 9 6-5-4-4H7L4 8M9 12l4-4" stroke={G} />
          </Svg>
        </RightTool>
        <RightSep $t={5.5} $b={4} />
        <RightTool>
          <Svg>
            <circle cx="5" cy="13" r="3.5" stroke="#777" strokeWidth="1.8" />
            <path d="M7 10l5-7M9 15h8M12 4c1-2 2 1 3 0s1-1 2-1" stroke="#777" strokeWidth="1.2" />
          </Svg>
        </RightTool>
      </RightBar>
    </Main>

    <Spreadsheet>
      <SideStrip>
        <SmallBtn>✕</SmallBtn>
        <SmallBtn><Svg w={4} h={7}><path d="M0 0l4 3.5L0 7z" fill="#aaa" /></Svg></SmallBtn>
        <VertLabel>Spreadsheet View</VertLabel>
      </SideStrip>
      <SheetBody>
        <ResultsBox>Multisim  -  14 października 2018, 14:18:29</ResultsBox>
        <TabRow $h={21} $gap={2} $mt={3}>
          <Tab $w={47} $active>Results</Tab>
          <Tab $w={40}>Nets</Tab>
          <Tab $w={70}>Components</Tab>
          <Tab $w={76}>Copper layers</Tab>
          <Tab $w={59}>Simulation</Tab>
        </TabRow>
      </SheetBody>
    </Spreadsheet>

    <StatusBar>
      <StatusCell $w={851} $pl={702}>-</StatusCell>
      <StatusCell $w={182} $pl={4}>cw1: Simulating...</StatusCell>
      <StatusCell $w={183} $pl={4}>Tran: 6.230 s</StatusCell>
      <Leds>
        {[1, 1, 0, 0, 0, 0, 1, 1].map((on, i) => (
          <Led key={i} $on={on} />
        ))}
      </Leds>
    </StatusBar>

    <Taskbar>
      <StartOrb><WinLogo /></StartOrb>
      <TaskButton>
        <Svg w={14} h={16}>
          <path d="M1 1h9l3 3v11H1z" fill="#fff" stroke="#8a98a8" />
          <rect x="3" y="4" width="4" height="4" fill="#3a70b8" />
          <path d="M8 5h3M8 7h3M3 10h8M3 12h8" stroke="#6688aa" />
        </Svg>
        Dokumenty
      </TaskButton>
      <TaskButton>
        <Svg w={14} h={14}>
          <circle cx="7" cy="7" r="7" fill="#db4437" />
          <path d="M7 7L1 4a7 7 0 0 0 5 10z" fill="#0f9d58" />
          <path d="M7 7l6-3a7 7 0 0 1-7 10z" fill="#ffcd40" />
          <circle cx="7" cy="7" r="3.3" fill="#4285f4" stroke="#fff" />
        </Svg>
        15_cwiczen_laborato...
      </TaskButton>
      <TaskButton>
        <Svg w={15} h={12}>
          <rect width="15" height="12" fill="#000" />
          <rect width="15" height="2.5" fill="#888" />
          <path d="M2 5h3M2 5v4h3M7 5v1M7 8v1M9 5l3 4" stroke="#fff" />
        </Svg>
        Administrator: C:\Wi...
      </TaskButton>
      <TaskButton $active>
        <MultisimMark />
        cw1 - Multisim - [cw...
      </TaskButton>
      <TaskButton>
        <Svg w={16} h={16}>
          <ellipse cx="6" cy="9" rx="6" ry="6" fill="#cfe0ee" stroke="#6a8296" />
          <circle cx="3.5" cy="8" r="1.5" fill="#e04030" />
          <circle cx="7" cy="6" r="1.5" fill="#30a050" />
          <circle cx="5" cy="12" r="1.5" fill="#3060d0" />
          <path d="M13 1v14" stroke="#e88a20" strokeWidth="2.4" />
        </Svg>
        1 - Paint
      </TaskButton>
      <Tray>
        <TrayIcon>
          <Svg w={16} h={16}>
            <circle cx="5" cy="8" r="4.5" fill="#2f6fd0" stroke="#fff" />
            <path d="M10 3c3 3 3 7 0 10M13 1c4 4 4 10 0 14" stroke="#f0a020" strokeWidth="1.6" />
          </Svg>
        </TrayIcon>
        <TrayIcon>
          <Svg w={16} h={16}>
            <path d="M8 1l6 3v6l-6 4-6-4V4z" fill="#34506c" stroke="#cde" />
            <path d="M2 4l6 4 6-4M8 8v6" stroke="#cde" />
            <path d="M12 9l1 2h2l-1.5 1.5.5 2-2-1-2 1 .5-2L9 11h2z" fill="#fbc02d" />
          </Svg>
        </TrayIcon>
        <TrayIcon>
          <Svg w={16} h={16}>
            <path d="M1 5h3l4-4v13l-4-3H1z" fill="#eef" stroke="#555" />
            <circle cx="11.5" cy="11" r="4.5" fill="#d81c1c" stroke="#fff" />
            <path d="M10 9.5l3 3M13 9.5l-3 3" stroke="#fff" />
          </Svg>
        </TrayIcon>
        <TrayIcon>
          <Svg w={16} h={16}>
            <path d="M2 1v15" stroke="#fff" strokeWidth="1.6" />
            <path d="M3 2c4 0 4 2 11 2l-3 3 3 3c-5 0-6-2-11-2z" fill="#fff" />
          </Svg>
        </TrayIcon>
        <TrayIcon>
          <Svg w={16} h={16}>
            <rect x="4.5" y="5.5" width="11" height="8" fill="#33475c" stroke="#fff" />
            <path d="M3 1v7M1 3v3M5 3v3M1 6h4M5 15h9" stroke="#fff" strokeWidth="1.3" />
          </Svg>
        </TrayIcon>
        <Clock>14:35</Clock>
        <ShowDesktop />
      </Tray>
    </Taskbar>
  </Page>
)

export default App
